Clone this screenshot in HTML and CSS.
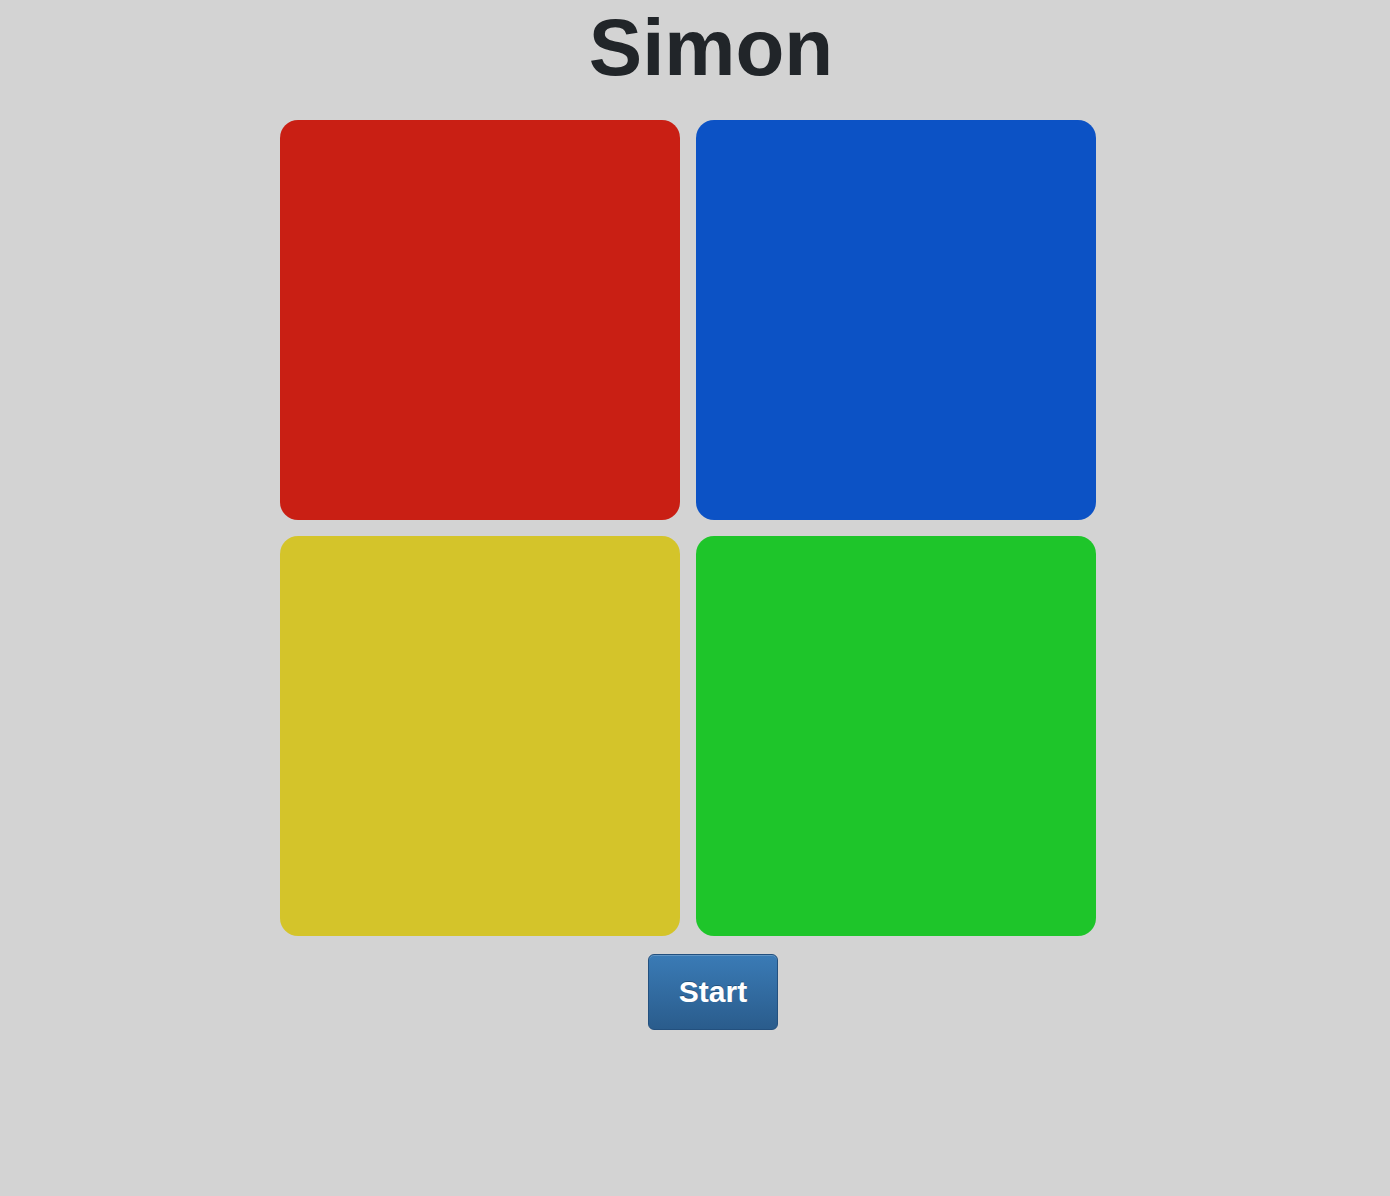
FILE: index.html
```html
<!DOCTYPE html>
<html>
<head>
<meta charset="utf-8">
<link rel="stylesheet" href="styles.css">
</head>
<body>
<h1 class="title">Simon</h1>
<div class="board">
  <div class="pad pad-red"></div>
  <div class="pad pad-blue"></div>
  <div class="pad pad-yellow"></div>
  <div class="pad pad-green"></div>
</div>
<div class="controls">
  <button class="start">Start</button>
</div>
</body>
</html>
```
FILE: styles.css
```css
html, body {
  margin: 0;
  padding: 0;
  background: #d3d3d3;
  height: 100%;
}
body {
  font-family: "Liberation Sans", Arial, sans-serif;
  color: #212529;
}
.title {
  margin: 0;
  padding-left: 32px;
  text-align: center;
  font-size: 80px;
  font-weight: bold;
  line-height: 96px;
  height: 120px;
}
.board {
  display: grid;
  grid-template-columns: 400px 400px;
  grid-auto-rows: 400px;
  gap: 16px;
  width: 816px;
  margin: 0 auto;
  padding-right: 14px;
}
.pad {
  border-radius: 18px;
}
.pad-red { background: #c91f14; }
.pad-blue { background: #0c52c5; }
.pad-yellow { background: #d4c42a; }
.pad-green { background: #1ec52a; }
.controls {
  display: flex;
  justify-content: center;
  padding-left: 36px;
  margin-top: 18px;
}
.start {
  width: 130px;
  height: 76px;
  border: 1px solid #23507e;
  border-radius: 6px;
  background: linear-gradient(#3a7bb6, #2a5c8c);
  color: #fff;
  font-family: "Liberation Sans", Arial, sans-serif;
  font-size: 30px;
  font-weight: bold;
  text-shadow: 0 -1px 0 rgba(0,0,0,0.25);
  box-shadow: inset 0 1px 0 rgba(255,255,255,0.2);
  padding: 0;
  cursor: pointer;
}
```
